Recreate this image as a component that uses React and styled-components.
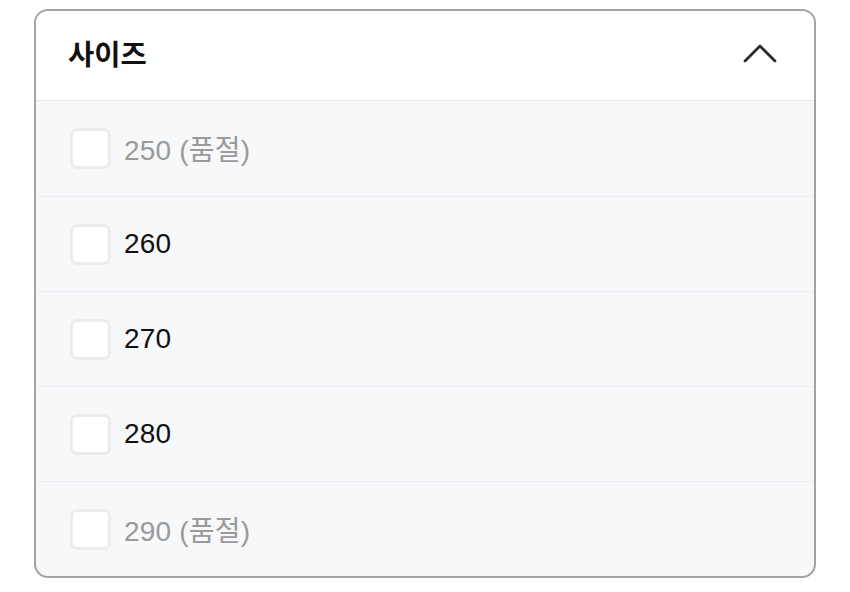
import React from "react";
import styled, { createGlobalStyle } from "styled-components";

const GlobalStyle = createGlobalStyle`
  body {
    margin: 0;
    background: #fff;
    font-family: "Liberation Sans", "Noto Sans CJK KR", sans-serif;
  }
`;

const Card = styled.div`
  box-sizing: border-box;
  width: 782px;
  margin: 9px 0 0 34px;
  border: 2px solid #a3a3a3;
  border-radius: 14px;
  overflow: hidden;
  background: #f7f8fa;
`;

const Header = styled.div`
  display: flex;
  align-items: center;
  justify-content: space-between;
  height: 90px;
  padding: 0 37px 6px 32px;
  box-sizing: border-box;
  background: #fff;
  border-bottom: 1px solid #e6e7ea;
`;

const Title = styled.h2`
  margin: 0;
  font-size: 28.5px;
  font-weight: 700;
  color: #111;
`;

const Row = styled.label`
  display: flex;
  align-items: center;
  gap: 13px;
  height: 95px;
  padding: 0 0 0 34px;
  box-sizing: border-box;
  border-top: ${(p) => (p.$first ? "none" : "1px solid #eceef1")};
`;

const Box = styled.span`
  box-sizing: border-box;
  width: 41px;
  height: 41px;
  background: #fff;
  border: 3px solid #ececee;
  border-radius: 7px;
`;

const Label = styled.span`
  font-size: 28px;
  letter-spacing: 0.2px;
  padding-bottom: 1px;
  color: ${(p) => (p.$soldOut ? "#9a9a9a" : "#111")};
`;

const sizes = [
  { value: 250, soldOut: true },
  { value: 260 },
  { value: 270 },
  { value: 280 },
  { value: 290, soldOut: true },
];

export default function App() {
  return (
    <>
      <GlobalStyle />
      <Card>
        <Header>
          <Title>사이즈</Title>
          <svg width="34" height="20" viewBox="0 0 34 20" fill="none">
            <polyline
              points="2,18 17,3 32,18"
              stroke="#2b2b2b"
              strokeWidth="2.8"
              strokeLinecap="round"
              strokeLinejoin="round"
            />
          </svg>
        </Header>
        {sizes.map((s, i) => (
          <Row key={s.value} $first={i === 0}>
            <Box />
            <Label $soldOut={s.soldOut}>
              {s.value}
              {s.soldOut ? " (품절)" : ""}
            </Label>
          </Row>
        ))}
      </Card>
    </>
  );
}
